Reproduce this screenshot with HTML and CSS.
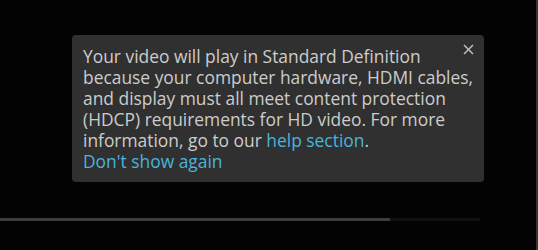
FILE: index.html
```html
<!DOCTYPE html>
<html lang="en">
<head>
  <meta charset="UTF-8" />
  <title>Player – HD notice</title>
  <link rel="stylesheet" href="styles.css">
</head>
<body>
  <div class="player">
    <!-- HDCP NOTICE -->
    <div class="notice">
      <p class="notice-text">
        Your video will play in Standard Definition<br>
        because your computer hardware, HDMI cables,<br>
        and display must all meet content protection<br>
        (HDCP) requirements for HD video. For more<br>
        information, go to our <a href="#">help section</a>.<br>
        <a href="#">Don't show again</a>
      </p>
      <button class="notice-close" aria-label="Close">
        <svg width="11" height="11" viewBox="0 0 11 11">
          <path d="M1 1 L10 10 M10 1 L1 10" stroke="#bdbdbd" stroke-width="1.5" fill="none" />
        </svg>
      </button>
    </div>

    <!-- SEEK BAR -->
    <div class="seek">
      <div class="seek-track">
        <div class="seek-fill"></div>
      </div>
    </div>
  </div>
</body>
</html>
```

FILE: styles.css
```css
/* RESET */
* {
  margin: 0;
  padding: 0;
  box-sizing: border-box;
}
body {
  background: #030303;
  font-family: "Open Sans", "Noto Sans", sans-serif;
}

/* PLAYER AREA */
.player {
  height: 250px;
  border-right: 2px solid #363636;
  padding-top: 35px;
}

/* NOTICE */
.notice {
  position: relative;
  margin-left: 72px;
  width: 412px;
  height: 147px;
  background: #303030;
  border-radius: 4px;
  padding: 11px 0 0 11px;
}
.notice-text {
  color: #cccccc;
  font-size: 17.4px;
  line-height: 21px;
  white-space: nowrap;
}
.notice-text a {
  color: #4ab4dc;
  text-decoration: none;
}
.notice-close {
  position: absolute;
  top: 9px;
  right: 10px;
  background: none;
  border: none;
  cursor: pointer;
  line-height: 0;
}

/* SEEK BAR */
.seek {
  margin-top: 36px;
}
.seek-track {
  width: 480px;
  height: 3px;
  background: #111;
}
.seek-fill {
  width: 390px;
  height: 3px;
  background: #3c3c3c;
}
```
